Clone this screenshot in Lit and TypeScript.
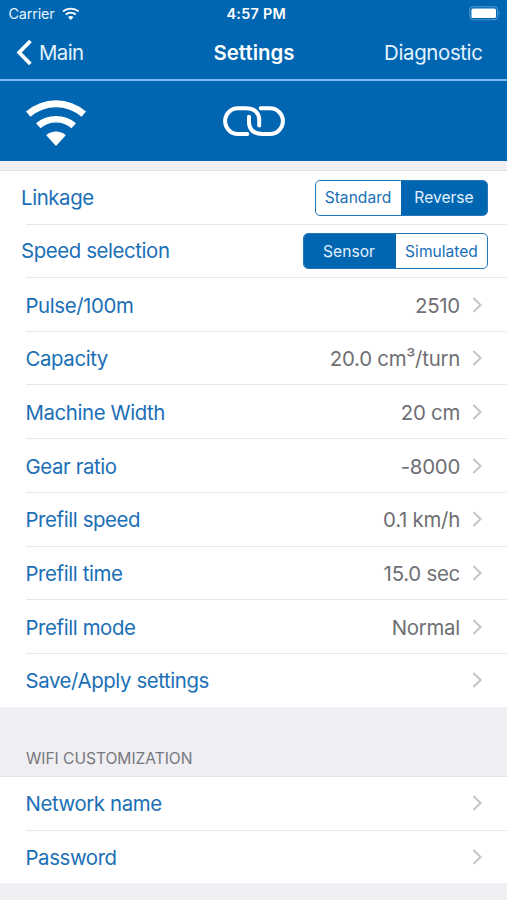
import { LitElement, html, css, svg } from "lit";
import { customElement, property } from "lit/decorators.js";

const chevron = html`<svg class="chev" width="12" height="18" viewBox="0 0 12 18"><path d="M2.4 2 9.6 9 2.4 16" fill="none" stroke="#c4c4c7" stroke-width="2"/></svg>`;

@customElement("setting-row")
class SettingRow extends LitElement {
  @property() label = "";
  @property() value = "";
  @property({ type: Boolean, reflect: true }) last = false;
  static styles = css`
    :host { display: block; height: 53.72px; }
    :host([last]) { height: 52.8px; }
    .row { height: 100%; box-sizing: border-box; margin-left: 26px; padding: 2.4px 24px 0 0; display: flex; align-items: center; border-bottom: 1px solid #e8e8eb; }
    :host([last]) .row { border-bottom-color: transparent; }
    .label { color: #1a6fb6; flex: 1; letter-spacing: -0.4px; margin-left: -0.5px; }
    .value { color: #6f6f74; margin-right: 11px; letter-spacing: -0.25px; }
    .chev { display: block; margin-top: -2px; }
  `;
  render() {
    return html`<div class="row"><span class="label">${this.label}</span><span class="value">${this.value}</span>${chevron}</div>`;
  }
}

@customElement("app-root")
class AppRoot extends LitElement {
  static styles = css`
    :host { display: block; width: 507px; height: 900px; overflow: hidden; background: #eeeef3; font-family: Inter, "Liberation Sans", sans-serif; font-size: 20.4px; line-height: 26px; letter-spacing: -0.2px; white-space: nowrap; }
    .status { height: 27px; background: #0066b2; color: #e4f2ff; display: grid; grid-template-columns: 1fr auto 1fr; align-items: center; padding: 1px 6px 0 8.5px; font-size: 14.4px; line-height: 18px; letter-spacing: -0.15px; box-sizing: border-box; }
    .carrier { display: flex; align-items: center; gap: 7px; }
    .carrier svg { margin-top: -2px; }
    .time { font-weight: 600; color: #fff; letter-spacing: 0.25px; margin-left: 3px; }
    .battery { justify-self: end; display: block; margin-top: -1px; }
    .nav { height: 52px; background: #0066b2; color: #e4f2ff; display: grid; grid-template-columns: 1fr auto 1fr; align-items: center; padding: 0 24.5px 1px 24.5px; box-sizing: border-box; }
    .back { display: flex; align-items: center; gap: 6px; margin-left: -8.5px; letter-spacing: -0.6px; }
    .title { font-weight: 600; color: #fff; letter-spacing: 0.05px; margin-left: 1px; }
    .right { justify-self: end; letter-spacing: -0.35px; }
    .rule { height: 2px; background: #7fbdf2; }
    .banner { height: 80px; background: #0066b2; display: grid; grid-template-columns: 1fr auto 1fr; align-items: center; padding: 0 25px; box-sizing: border-box; }
    .banner svg { display: block; }
    .signal { margin-top: 2px; }
    .gap { height: 10px; border-bottom: 1px solid #e3e3e7; box-sizing: border-box; }
    .list { background: #fff; }
    .seg-row { height: 53.5px; padding: 0 19px 0 21px; display: flex; align-items: center; justify-content: space-between; box-sizing: border-box; color: #1a6fb6; letter-spacing: -0.4px; background: linear-gradient(#e8e8eb, #e8e8eb) 26px 100% / 100% 1px no-repeat; }
    .seg { display: flex; height: 36px; box-sizing: border-box; border: 1.5px solid #2478ba; border-radius: 5px; overflow: hidden; font-size: 15.6px; letter-spacing: 0; }
    .opt { display: flex; align-items: center; justify-content: center; padding-top: 1px; box-sizing: border-box; }
    .on { background: #0066b2; color: #e4f2ff; }
    .a { width: 85px; padding-right: 1px; } .b { width: 86px; } .c { width: 92px; padding-right: 2px; } .d { width: 91px; }
    .head { height: 70px; box-sizing: border-box; padding: 39px 0 0 26px; font-size: 15.6px; color: #78787d; letter-spacing: -0.05px; border-bottom: 1px solid #e3e3e7; }
  `;
  render() {
    const rows = [["Pulse/100m", "2510"], ["Capacity", "20.0 cm³/turn"], ["Machine Width", "20 cm"], ["Gear ratio", "-8000"], ["Prefill speed", "0.1 km/h"], ["Prefill time", "15.0 sec"], ["Prefill mode", "Normal"], ["Save/Apply settings", ""]];
    const arcs = svg`<path d="M1 13.5A46 46 0 0 1 61 13.5L56.5 18.7A39 39 0 0 0 5.5 18.7Z"/><path d="M11 25.2A31 31 0 0 1 51 25.2L46.5 30.2A24 24 0 0 0 15.5 30.2Z"/><path d="M21.2 37.2A15 15 0 0 1 40.8 37.2L31 48Z"/>`;
    return html`
      <div class="status">
        <span class="carrier">Carrier
          <svg width="17.500" height="13" viewBox="0 0 62 48" preserveAspectRatio="none" fill="#fff">${arcs}</svg>
        </span>
        <span class="time">4:57 PM</span>
        <svg class="battery" width="32" height="15" viewBox="0 0 32 15"><rect x=".7" y=".7" width="28" height="13" rx="3.6" fill="none" stroke="#4f98d1" stroke-width="1.1"/><rect x="2.4" y="2.4" width="24.6" height="9.600" rx="1.6" fill="#fff"/><path d="M30 5.2q1.7 2 0 4Z" fill="#6aa8da"/></svg>
      </div>
      <div class="nav">
        <span class="back"><svg width="17" height="27" viewBox="0 0 17 27"><path d="M14.4 2 3.200 13.5 14.4 25" fill="none" stroke="#fff" stroke-width="3.8"/></svg>Main</span>
        <span class="title">Settings</span>
        <span class="right">Diagnostic</span>
      </div>
      <div class="rule"></div>
      <div class="banner">
        <svg class="signal" width="62" height="48" viewBox="0 0 62 48" fill="#fff">${arcs}</svg>
        <svg width="62" height="32" viewBox="0 0 62 32" fill="none" stroke="#fff" stroke-width="4" stroke-linecap="round"><path d="M24.300 29H15A12.900 12.900 0 0 1 15 3.200H23C31.500 3.200 36.200 8 36.200 14.500V20.500"/><path d="M37.700 3.200H47A12.900 12.900 0 0 1 47 29H39C30.500 29 26 24 26 17.500V11.700"/></svg>
        <span></span>
      </div>
      <div class="gap"></div>
      <div class="list">
        <div class="seg-row"><span>Linkage</span><div class="seg"><span class="opt a">Standard</span><span class="opt b on">Reverse</span></div></div>
        <div class="seg-row"><span>Speed selection</span><div class="seg"><span class="opt c on">Sensor</span><span class="opt d">Simulated</span></div></div>
        ${rows.map((r, i) => html`<setting-row .label=${r[0]} .value=${r[1]} .last=${i === rows.length - 1}></setting-row>`)}
      </div>
      <div class="head">WIFI CUSTOMIZATION</div>
      <div class="list">
        <setting-row label="Network name"></setting-row>
        <setting-row label="Password" last></setting-row>
      </div>
    `;
  }
}
